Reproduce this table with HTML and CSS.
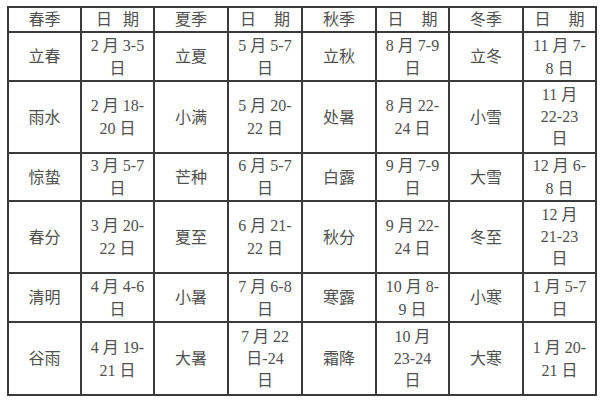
FILE: index.html
```html
<!DOCTYPE html>
<html lang="zh-CN">
<head>
<meta charset="utf-8">
<title>二十四节气</title>
<link rel="stylesheet" href="styles.css">
</head>
<body>
<table class="terms">
  <colgroup>
    <col class="c73"><col class="c73"><col class="c74"><col class="c74">
    <col class="c74"><col class="c73"><col class="c74"><col class="c73">
  </colgroup>
  <tr class="head">
    <td>春季</td><td>日<span class="gap-s"></span>期</td>
    <td>夏季</td><td>日<span class="gap-l"></span>期</td>
    <td>秋季</td><td>日<span class="gap-l"></span>期</td>
    <td>冬季</td><td>日<span class="gap-l"></span>期</td>
  </tr>
  <tr class="r1">
    <td>立春</td><td>2 月 3-5<br>日</td>
    <td>立夏</td><td>5 月 5-7<br>日</td>
    <td>立秋</td><td>8 月 7-9<br>日</td>
    <td>立冬</td><td>11 月 7-<br>8 日</td>
  </tr>
  <tr class="r2">
    <td>雨水</td><td>2 月 18-<br>20 日</td>
    <td>小满</td><td>5 月 20-<br>22 日</td>
    <td>处暑</td><td>8 月 22-<br>24 日</td>
    <td>小雪</td><td class="three">11 月<br>22-23<br>日</td>
  </tr>
  <tr class="r3">
    <td>惊蛰</td><td>3 月 5-7<br>日</td>
    <td>芒种</td><td>6 月 5-7<br>日</td>
    <td>白露</td><td>9 月 7-9<br>日</td>
    <td>大雪</td><td>12 月 6-<br>8 日</td>
  </tr>
  <tr class="r4">
    <td>春分</td><td>3 月 20-<br>22 日</td>
    <td>夏至</td><td>6 月 21-<br>22 日</td>
    <td>秋分</td><td>9 月 22-<br>24 日</td>
    <td>冬至</td><td class="three">12 月<br>21-23<br>日</td>
  </tr>
  <tr class="r5">
    <td>清明</td><td>4 月 4-6<br>日</td>
    <td>小暑</td><td>7 月 6-8<br>日</td>
    <td>寒露</td><td>10 月 8-<br>9 日</td>
    <td>小寒</td><td>1 月 5-7<br>日</td>
  </tr>
  <tr class="r6">
    <td>谷雨</td><td>4 月 19-<br>21 日</td>
    <td>大暑</td><td class="three">7 月 22<br>日-24<br>日</td>
    <td>霜降</td><td class="three">10 月<br>23-24<br>日</td>
    <td>大寒</td><td>1 月 20-<br>21 日</td>
  </tr>
</table>
</body>
</html>
```

FILE: styles.css
```css
html, body {
  margin: 0;
  padding: 0;
  background: #ffffff;
}

body {
  padding: 6px 0 0 7px;
}

.terms {
  border-collapse: collapse;
  table-layout: fixed;
  width: 590px;
  font-family: "Liberation Serif", "Noto Sans CJK SC", serif;
  font-size: 16px;
  line-height: 23px;
  color: #505050;
}

.c73 { width: 73px; }
.c74 { width: 74px; }

.terms td {
  border: 2px solid #3a3a3a;
  padding: 0;
  text-align: center;
  vertical-align: middle;
  white-space: nowrap;
}

.terms td.three {
  line-height: 22px;
}

.gap-s {
  display: inline-block;
  width: 11px;
}

.gap-l {
  display: inline-block;
  width: 18px;
}

.head { height: 25px; }
.r1 { height: 49px; }
.r2 { height: 72px; }
.r3 { height: 48px; }
.r4 { height: 72px; }
.r5 { height: 49px; }
.r6 { height: 73px; }
```
